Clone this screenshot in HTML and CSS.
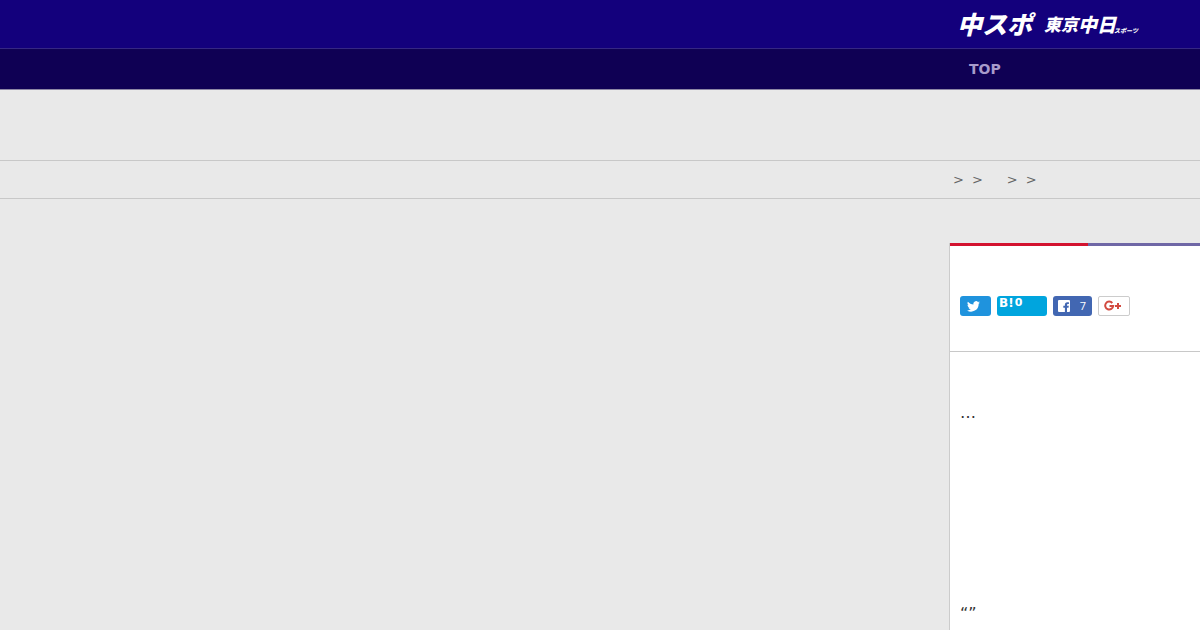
FILE: index.html
```html
<!DOCTYPE html>
<html lang="ja">
<head>
<meta charset="utf-8">
<title>中スポ 東京中日スポーツ</title>
<link rel="stylesheet" href="styles.css">
</head>
<body>
<header class="masthead row">
  <a class="logo" href="#"><span class="logo-main">中スポ</span><span class="logo-tokyo">東京</span><span class="logo-chunichi">中日</span><span class="logo-sports">スポーツ</span></a>
</header>
<nav class="nav row"><a class="nav-link" href="#">TOP</a></nav>
<div class="ad-space"></div>
<nav class="crumbs row" aria-label="breadcrumb">
  <div class="crumb-list"><span>&gt;</span><span>&gt;</span><span class="crumb-next">&gt;</span><span>&gt;</span></div>
</nav>
<main class="content row">
  <article class="panel">
    <div class="stripe"><span class="stripe-red"></span><span class="stripe-purple"></span></div>
    <div class="share">
      <button class="btn twitter" type="button" aria-label="Twitter">
        <svg width="13" height="11" viewBox="0 0 24 20"><path fill="#fff" d="M24 2.4c-.9.4-1.800.7-2.800.8 1-.6 1.800-1.600 2.200-2.700-1 .6-2 1-3.100 1.200A4.900 4.900 0 0 0 11.900 6.100C7.800 5.900 4.200 4 1.700 1a4.900 4.900 0 0 0 1.500 6.500C2.400 7.500 1.600 7.300 1 6.900c-.1 2.300 1.600 4.400 3.900 4.900-.7.200-1.500.2-2.200.1.600 2 2.400 3.400 4.600 3.400A9.900 9.900 0 0 1 0 17.300a14 14 0 0 0 21.500-12.400C22.500 4.200 23.300 3.400 24 2.400z"/></svg>
      </button>
      <button class="btn hatena" type="button"><span class="hatena-mark">B!</span><span class="hatena-count">0</span></button>
      <button class="btn facebook" type="button">
        <svg width="12" height="12" viewBox="0 0 12 12"><path fill="#fff" d="M1 0h10a1 1 0 0 1 1 1v10a1 1 0 0 1-1 1H9V7.700h1.500l.3-1.900H9V4.900c0-.6.300-.9.900-.9h1V2.200H9.300C7.700 2.200 6.900 3.100 6.900 4.600v1.200H5.300v1.900h1.600V12H1a1 1 0 0 1-1-1V1a1 1 0 0 1 1-1z"/></svg>
        <span>7</span>
      </button>
      <button class="btn google" type="button" aria-label="Google Plus">
        <svg width="18" height="12" viewBox="0 0 18 12" fill="none" stroke="#d24a40" stroke-width="2"><path d="M8.300 3A4 4 0 1 0 9.200 6H5.500M11 6h6M14 3v6"/></svg>
      </button>
    </div>
    <div class="story">
      <p class="text">…</p>
      <p class="text quote">“”</p>
    </div>
  </article>
</main>
</body>
</html>
```
FILE: styles.css
```css
* { box-sizing: border-box; }
html, body { height: 100%; }
body {
  margin: 0;
  display: flex;
  flex-direction: column;
  background: #e9e9e9;
  color: #333;
  font-family: "DejaVu Sans", "Noto Sans CJK JP", sans-serif;
}
a { color: inherit; text-decoration: none; }
.row { display: grid; grid-template-columns: minmax(0, 1fr) 251px; }
.row > * { grid-column: 2; }
.masthead { height: 49px; flex: none; background: #13007c; border-bottom: 1px solid #352783; overflow: hidden; }
.logo {
  display: flex;
  align-items: center;
  height: 46px;
  padding-left: 8px;
  color: #fff;
  font: italic 900 25px/1 "Noto Sans CJK JP", sans-serif;
  white-space: nowrap;
}
.logo-main { width: 87px; }
.logo-tokyo { width: 34px; font-size: 17px; }
.logo-chunichi { width: 36px; font-size: 19px; }
.logo-sports { padding-top: 16px; font-size: 6px; }
.nav { height: 41px; flex: none; background: #0f0054; border-bottom: 1px solid #8c86a5; }
.nav-link { padding-left: 20px; color: #a79bcb; font-size: 14px; font-weight: bold; line-height: 40px; }
.ad-space { height: 70px; flex: none; }
.crumbs { flex: none; border-top: 1px solid #c8c8c8; border-bottom: 1px solid #c8c8c8; }
.crumb-list { display: flex; gap: 8px; padding: 1px 0 0 4px; color: #666; font-size: 13px; line-height: 36px; }
.crumb-next { margin-left: 16px; }
.content { flex: 1; padding-top: 44px; }
.panel { background: #fff; border-left: 1px solid #ccc; }
.stripe { display: flex; height: 3px; }
.stripe-red { width: 138px; background: #d3132f; }
.stripe-purple { flex: 1; background: #6f67a6; }
.share { display: flex; gap: 6px; padding: 50px 10px 35px; border-bottom: 1px solid #c8c8c8; }
.btn {
  display: flex;
  align-items: center;
  height: 20px;
  padding: 0;
  border: 0;
  border-radius: 3px;
  color: #fff;
  font: 11px/14px "DejaVu Sans", sans-serif;
}
.twitter { width: 31px; padding-left: 7px; background: #1f93dd; }
.hatena { width: 50px; gap: 1px; padding-left: 2px; align-items: flex-start; background: #00a5de; font-weight: bold; }
.hatena-mark { font-size: 12px; }
.facebook { width: 39px; justify-content: space-between; padding: 0 6px 0 5px; background: #4267b2; font-family: "Open Sans", sans-serif; }
.google { width: 32px; padding-left: 5px; background: #fff; border: 1px solid #ccc; border-radius: 2px; }
.story { padding: 48px 10px 0; }
.text { margin: 0; font-size: 16px; line-height: 26px; }
.quote { margin-top: 175px; }
```
